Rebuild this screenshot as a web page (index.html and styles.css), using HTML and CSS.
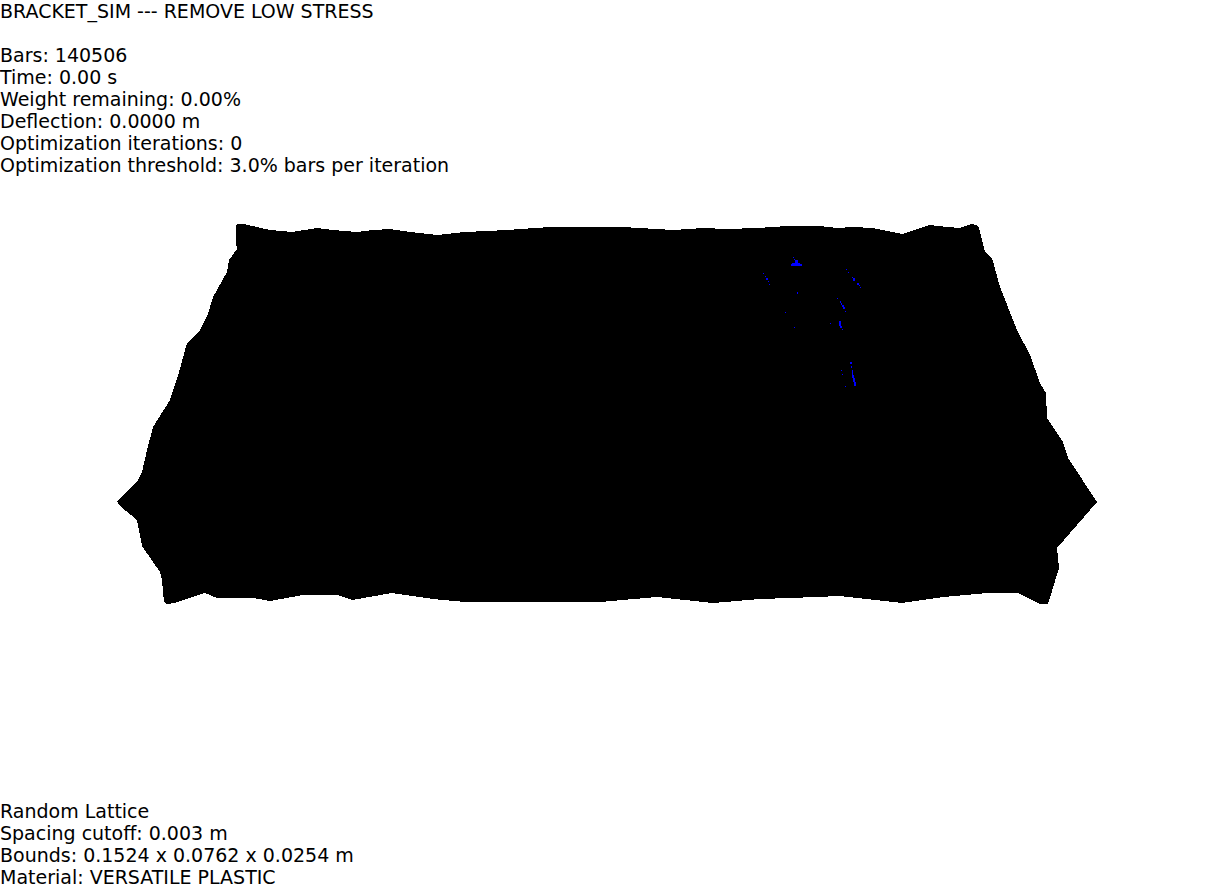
FILE: index.html
```html
<!DOCTYPE html>
<html lang="en">
<head>
    <meta charset="UTF-8">
    <title>BRACKET_SIM</title>
    <link rel="stylesheet" href="styles.css">
</head>
<body>
    <div class="page">
        <div class="stats">
            <p>BRACKET_SIM --- REMOVE LOW STRESS</p>
            <p>&nbsp;</p>
            <p>Bars: 140506</p>
            <p>Time: 0.00 s</p>
            <p>Weight remaining: 0.00%</p>
            <p>Deflection: 0.0000 m</p>
            <p>Optimization iterations: 0</p>
            <p>Optimization threshold: 3.0% bars per iteration</p>
        </div>

        <svg class="lattice" viewBox="0 176 1214 624" width="1214" height="624">
            <!-- outline of the bars, top edge then right side, bottom, left side -->
            <polygon class="bars" points="236,225 238,224 244,224 257,227 270,230 292,232 317,228 333,230 357,232 373,230 390,229 410,232 437,235 465,232 507,230 550,227 622,227 673,230 703,228 727,229 757,228 788,226 820,226 837,228 853,227 873,228 902,234 930,225 947,227 960,228 971,224 977,225 979,228 985,252 992,258 1000,287 1017,330 1030,355 1040,383 1046,393 1047,418 1063,442 1068,458 1097,502 1057,548 1059,568 1048,604 1040,604 1018,593 987,593 943,597 902,603 840,596 790,598 760,599 713,603 657,597 600,602 543,602 465,602 433,599 392,593 352,600 337,595 303,595 270,601 253,598 217,598 205,593 174,603 167,604 164,602 162,580 160,572 142,546 137,520 120,506 117,501 138,480 142,472 147,450 153,427 170,400 179,372 187,343 199,332 208,314 213,297 227,272 229,260 237,249 236,243" />
            <!-- high stress bars that are still showing -->
            <path class="stress" d="M793 257h1v1h-1z M794 259h1v1h-1z M795 260h3v3h-3z M792 263h8v1h-8z M791 264h11v2h-11z
                M763 273h1v1h-1z M765 276h1v1h-1z M766 278h2v2h-2z M768 281h1v1h-1z M769 284h1v1h-1z
                M797 292h1v2h-1z M785 312h1v1h-1z M794 327h1v1h-1z
                M846 269h1v1h-1z M848 272h1v1h-1z M852 277h1v1h-1z M853 278h2v3h-2z M857 283h2v2h-2z M859 285h1v1h-1z M860 287h1v1h-1z
                M837 298h1v1h-1z M840 301h1v2h-1z M841 303h1v2h-1z M842 305h2v2h-2z M843 307h2v2h-2z M845 311h1v1h-1z
                M830 323h1v1h-1z M839 321h2v5h-2z M840 326h2v2h-2z M842 329h1v1h-1z
                M850 362h2v2h-2z M851 366h1v2h-1z M852 370h1v5h-1z M852 375h2v3h-2z M853 378h2v4h-2z M854 382h2v4h-2z
                M841 370h1v1h-1z M842 374h1v1h-1z M845 386h1v1h-1z" />
        </svg>

        <div class="stats">
            <p>Random Lattice</p>
            <p>Spacing cutoff: 0.003 m</p>
            <p>Bounds: 0.1524 x 0.0762 x 0.0254 m</p>
            <p>Material: VERSATILE PLASTIC</p>
        </div>
    </div>
</body>
</html>
```

FILE: styles.css
```css
* {
    margin: 0;
    padding: 0;
}
html, body {
    background: #fff;
}
.page {
    display: flex;
    flex-direction: column;
    height: 889px;
    overflow: hidden;
}
.stats {
    font-family: "DejaVu Sans", sans-serif;
    font-size: 19px;
    line-height: 22px;
    color: #000;
    white-space: nowrap;
}
.lattice {
    display: block;
    flex: none;
}
.bars {
    fill: #000;
    shape-rendering: crispEdges;
}
.stress {
    fill: #00f;
    shape-rendering: crispEdges;
}
```
